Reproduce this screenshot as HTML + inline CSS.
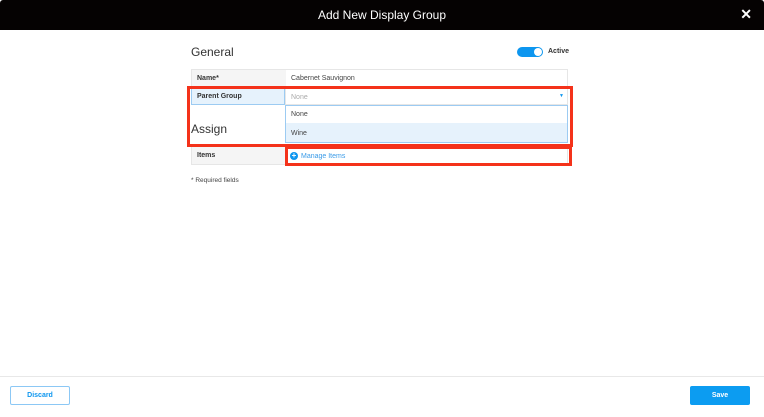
<!DOCTYPE html>
<html><head><meta charset="utf-8"><style>
*{box-sizing:border-box;margin:0;padding:0}
body{width:764px;height:417px;background:#fff;font-family:"Liberation Sans",sans-serif;position:relative;overflow:hidden;color:#333}
.hdr{position:absolute;left:0;top:0;width:764px;height:30px;background:#050202;color:#fff;text-align:center;font-size:12px;line-height:30px;border-radius:3px 3px 0 0}
.x{position:absolute;right:12px;top:0;font-size:14px;font-weight:bold;line-height:29px}
.abs{position:absolute}
.lbl{font-size:7px;font-weight:bold;color:#333}
.row{position:absolute;left:191px;width:377px;border:1px solid #e6e6e6}
.row .l{position:absolute;left:0;top:0;width:94px;height:100%;background:#f5f5f5}
</style></head><body>
<div class="hdr">Add New Display Group<span class="x">✕</span></div>
<div class="abs" style="left:191px;top:45px;font-size:12px;color:#333">General</div>
<div class="abs" style="left:517px;top:47px;width:26px;height:10px;border-radius:5px;background:#0d96ef"></div>
<div class="abs" style="left:534px;top:48px;width:8px;height:8px;border-radius:50%;background:#fff"></div>
<div class="abs lbl" style="left:548px;top:48px;font-size:7px">Active</div>

<div class="row" style="top:69px;height:19px"><div class="l"></div></div>
<div class="abs lbl" style="left:197px;top:75px">Name*</div>
<div class="abs" style="left:291px;top:75px;font-size:7px;color:#444">Cabernet Sauvignon</div>

<div class="abs" style="left:191px;top:88px;width:94px;height:17px;background:#e6f2fc;border:1px solid #9ccbf2"></div>
<div class="abs lbl" style="left:197px;top:93px">Parent Group</div>
<div class="abs" style="left:285px;top:88px;width:283px;height:17px;border:1px solid #e6e6e6;background:#fff"></div>
<div class="abs" style="left:291px;top:94px;font-size:7px;color:#aaa">None</div>
<div class="abs" style="left:559px;top:93px;font-size:5px;color:#0d96ef">▼</div>

<div class="abs" style="left:191px;top:122px;font-size:12px;color:#333">Assign</div>
<div class="abs" style="left:285px;top:105px;width:283px;height:38px;border:1px solid #9ccbf2;background:#fff"></div>
<div class="abs" style="left:286px;top:123px;width:281px;height:19px;background:#e6f2fc"></div>
<div class="abs" style="left:291px;top:111px;font-size:7px;color:#444">None</div>
<div class="abs" style="left:291px;top:130px;font-size:7px;color:#444">Wine</div>

<div class="row" style="top:146px;height:19px"><div class="l"></div></div>
<div class="abs lbl" style="left:197px;top:152px">Items</div>
<div class="abs" style="left:290px;top:152px;width:8px;height:8px;border-radius:50%;background:#0d96ef;color:#fff;font-size:8px;line-height:8px;text-align:center;font-weight:bold">+</div>
<div class="abs" style="left:301px;top:153px;font-size:7px;color:#3a9be8">Manage Items</div>

<div class="abs" style="left:187px;top:86px;width:386px;height:61px;border:3px solid #f4321a"></div>
<div class="abs" style="left:285px;top:146px;width:287px;height:20px;border:3px solid #f4321a"></div>

<div class="abs" style="left:191px;top:177px;font-size:6.5px;color:#444">* Required fields</div>

<div class="abs" style="left:0;top:376px;width:764px;height:1px;background:#e8e8e8"></div>
<div class="abs" style="left:10px;top:386px;width:60px;height:19px;border:1px solid #8cc8f5;border-radius:2px;color:#0d96ef;font-size:7px;font-weight:bold;text-align:center;line-height:17px">Discard</div>
<div class="abs" style="left:690px;top:386px;width:60px;height:19px;background:#0c9cf1;border-radius:2px;color:#fff;font-size:7px;font-weight:bold;text-align:center;line-height:19px">Save</div>
</body></html>
